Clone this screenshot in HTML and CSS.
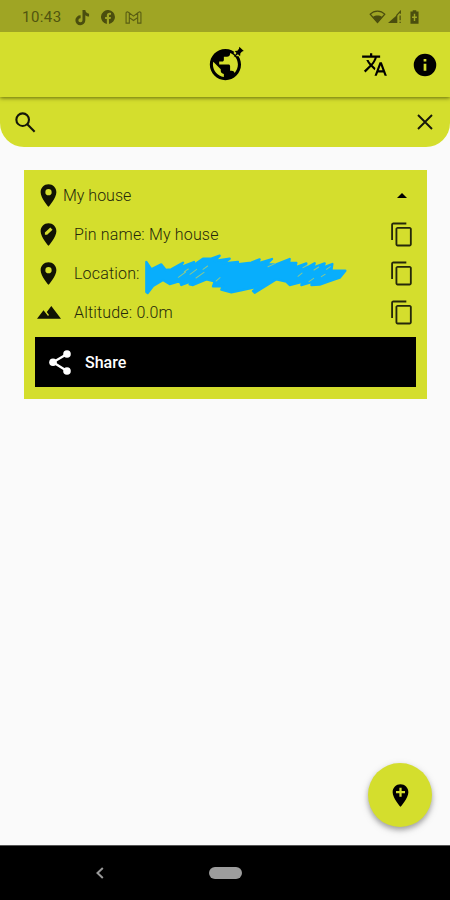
FILE: index.html
```html
<!DOCTYPE html>
<html lang="en">
<head>
<meta charset="utf-8">
<title>Saved pins</title>
<link rel="stylesheet" href="styles.css">
</head>
<body>
<svg class="defs" aria-hidden="true">
  <symbol id="pin" viewBox="0 0 24 24"><path d="M12 2C8.13 2 5 5.13 5 9c0 5.25 7 13 7 13s7-7.75 7-13c0-3.87-3.13-7-7-7zm0 9.8a2.8 2.8 0 1 1 0-5.6 2.8 2.8 0 0 1 0 5.6z"/></symbol>
  <symbol id="copy" viewBox="0 0 24 24"><path d="M16 1H4c-1.100 0-2 .9-2 2v14h1.700V2.700H16V1zm3 4H8c-1.100 0-2 .9-2 2v14c0 1.100.9 2 2 2h11c1.100 0 2-.9 2-2V7c0-1.100-.9-2-2-2zm.3 16.300H7.700V6.700h11.600v14.600z"/></symbol>
</svg>
<div class="phone">
  <header class="status">
    <span class="time">10:43</span>
    <svg class="s-tiktok" viewBox="0 0 16 18"><path d="M8 1h3c.2 2.300 1.700 3.700 4 4v3c-1.500 0-2.900-.5-4-1.300V12a5.300 5.300 0 1 1-5-5.300v3.100A2.200 2.200 0 1 0 8 12z"/></svg>
    <svg class="s-fb" viewBox="0 0 24 24"><path d="M24 12a12 12 0 1 0-14 11.800V15.500H7V12h3V9.400C10 6.400 11.800 4.700 14.500 4.700c1.300 0 2.700.3 2.700.3v3h-1.500c-1.500 0-2 .9-2 1.900V12H17l-.5 3.500h-2.800v8.300A12 12 0 0 0 24 12z"/></svg>
    <svg class="s-mail" viewBox="0 0 18 14"><path d="M1 13V2.200C1 1 2.500.5 3.500 1.300L9 5.500l5.500-4.200C15.500.5 17 1 17 2.200V13h-3.500V7L9 10.300 4.500 7v6zM4.500 2v5M13.500 2v5"/></svg>
    <svg class="s-wifi" viewBox="0 0 18 15"><path class="line" d="M1.200 4.500C5.500 0 12.500 0 16.800 4.500L9 13.500z"/><path d="M4 7.500c3-2 7-2 10 0l-5 6.200z"/></svg>
    <svg class="s-cell" viewBox="0 0 15 15"><path d="M0 14 10 5v9z"/><path class="line" d="m9 6 4.200-4.500V4M13 6v5M13 12.500V14"/></svg>
    <svg class="s-batt" viewBox="0 0 10 15"><path fill-rule="evenodd" d="M3 0h4v1.500h2.500V15h-9V1.500H3zM4.200 4v3H2.300v1.500h1.900V12h1.600V8.500h1.900V7H5.800V4z"/></svg>
  </header>
  <div class="appbar">
    <svg class="globe" viewBox="0 0 36 36"><g transform="translate(-2.300 -.1) scale(1.560)"><path d="M12 2C6.480 2 2 6.480 2 12s4.480 10 10 10 10-4.480 10-10S17.520 2 12 2zm-1 17.930c-3.950-.49-7-3.850-7-7.930 0-.62.08-1.210.21-1.790L9 15v1c0 1.100.9 2 2 2v1.930zm6.900-2.540c-.26-.81-1-1.390-1.900-1.390h-1v-3c0-.55-.45-1-1-1H8v-2h2c.55 0 1-.45 1-1V7h2c1.100 0 2-.9 2-2v-.41c2.930 1.190 5 4.060 5 7.410 0 2.080-.8 3.970-2.100 5.390z"/></g><path class="gap" d="m24.500 7 3-4 4.500 4.500-4 3z"/><path d="m30.300.7 4.500 4.200-1.700.5-1.700 1.800-.3 3-2.200-1.900-4.400 3.300 3-4.500-1.900-2.200 2.800-.2L30 2.800z"/></svg>
    <svg class="translate" viewBox="0 0 24 24"><path d="M12.870 15.070l-2.540-2.510.03-.03c1.740-1.940 2.980-4.170 3.710-6.530H17V4h-7V2H8v2H1v1.990h11.170C11.500 7.920 10.440 9.750 9 11.350 8.070 10.320 7.300 9.190 6.690 8h-2c.73 1.630 1.730 3.170 2.980 4.560l-5.090 5.020L4 19l5-5 3.110 3.110.76-2.040zM18.500 10h-2L12 22h2l1.120-3h4.750L21 22h2l-4.500-12zm-2.620 7l1.620-4.330L19.120 17h-3.240z"/></svg>
    <svg class="info" viewBox="0 0 24 24"><path d="M12 2a10 10 0 1 0 0 20 10 10 0 0 0 0-20zm1.200 15h-2.400v-6h2.400zm0-8h-2.400V6.600h2.400z"/></svg>
  </div>
  <div class="search">
    <svg class="mag" viewBox="0 0 20 20"><circle cx="7.300" cy="7.300" r="6"/><path d="m11.700 11.700 7 7"/></svg>
    <svg class="close" viewBox="0 0 16 16"><path d="m1 1 14 14M15 1 1 15"/></svg>
  </div>
  <main class="content">
    <section class="card">
      <div class="row head">
        <svg class="ico"><use href="#pin"/></svg>
        <span class="label">My house</span>
        <svg class="caret" viewBox="0 0 10 5"><path d="M0 5 5 0l5 5z"/></svg>
      </div>
      <div class="row">
        <svg class="ico" viewBox="0 0 24 24"><path fill-rule="evenodd" d="M12 2C8.130 2 5 5.130 5 9c0 5.250 7 13 7 13s7-7.750 7-13c0-3.870-3.130-7-7-7zM8.800 12.300v-2l4.800-4.600 2 2-4.800 4.600z"/></svg>
        <span class="label">Pin name: My house</span>
        <svg class="copy"><use href="#copy"/></svg>
      </div>
      <div class="row">
        <svg class="ico"><use href="#pin"/></svg>
        <span class="label">Location:</span>
        <svg class="scribble" viewBox="40 35 620 125"><path d="M50 62 65 84 95 69 108 86 125 84 160 64 150 79 193 62 185 76 220 52 245 52 270 43 255 59 300 52 280 66 325 62 320 69 365 64 390 54 385 66 427 53 410 69 440 69 480 53 478 64 500 65 495 79 530 66 525 82 555 66 550 79 585 66 580 79 608 68 605 88 647 88 630 109 595 121 570 130 545 131 550 121 515 131 520 121 480 131 470 121 440 114 375 154 370 149 385 136 330 148 305 153 275 145 280 134 250 135 255 120 230 114 190 131 180 129 200 114 155 131 150 119 120 128 100 116 70 134 54 155 50 152z"/><path class="gap-line" d="m146 108 22-16M181 99l20-15M199 110l24-17M164 91l12-8M220 84l14-10M259 119l12-10M415 76l22-10M505 105l12-10M553 86l14-9M538 121l14-10M575 106l11-7M590 84l12-8M520 79l14-8"/></svg>
        <svg class="copy"><use href="#copy"/></svg>
      </div>
      <div class="row">
        <svg class="ico hills" viewBox="0 0 24 13"><path d="M0 12.800 6.500 4.300l2.800 3.500 1.700 2.100 1-.8-2.200-3L14.300 0 24 12.800z"/></svg>
        <span class="label">Altitude: 0.0m</span>
        <svg class="copy"><use href="#copy"/></svg>
      </div>
      <div class="share">
        <svg viewBox="0 0 22 25"><path d="M18 4 4 12.300 18 21"/><circle cx="18" cy="4" r="3.800"/><circle cx="4" cy="12.300" r="3.800"/><circle cx="18" cy="21" r="3.800"/></svg>
        <span>Share</span>
      </div>
    </section>
    <div class="fab"><svg viewBox="0 0 24 24"><path fill-rule="evenodd" d="M12 2C8.130 2 5 5.130 5 9c0 5.250 7 13 7 13s7-7.750 7-13c0-3.870-3.130-7-7-7zM11 5h2v3h3v2h-3v3h-2v-3H8V8h3z"/></svg></div>
  </main>
  <nav class="nav">
    <svg class="back" viewBox="0 0 8 12"><path d="M6.800 1 1.500 6l5.300 5"/></svg>
    <span class="home"></span>
  </nav>
</div>
</body>
</html>
```

FILE: styles.css
```css
* { box-sizing: border-box; }
body { margin: 0; font-family: Roboto, "Liberation Sans", sans-serif; background: #fafafa; }
svg { display: block; flex: none; }
.defs { position: absolute; width: 0; height: 0; }
.phone { width: 450px; height: 900px; display: flex; flex-direction: column; overflow: hidden; }

.status { height: 32px; flex: none; display: flex; align-items: center; background: #9fa524; padding: 2px 31px 0 22px; color: #51550f; fill: #4b4e0e; position: relative; z-index: 2; }
.time { width: 41px; font-size: 15px; letter-spacing: .45px; white-space: nowrap; }
.s-tiktok { width: 15px; height: 17px; margin-left: 12px; }
.s-fb { width: 14px; height: 14px; margin-left: 11px; }
.s-mail { width: 17px; height: 13px; margin-left: 10px; fill: none; stroke: #5a5e13; stroke-width: 1.2; }
.s-wifi { width: 17px; height: 14px; margin-left: auto; }
.s-cell { width: 14px; height: 14px; margin-left: 2px; }
.s-batt { width: 9px; height: 14px; margin-left: 8px; }
.line { fill: none; stroke: #4b4e0e; stroke-width: 1.3; }

.appbar { height: 65px; flex: none; display: flex; align-items: center; background: #d4de2d; padding: 0 12px 0 209px; position: relative; z-index: 1; box-shadow: 0 1px 4px rgba(50, 55, 0, .7); }
.globe { width: 36px; height: 36px; margin-top: -2px; }
.gap { fill: #d4de2d; }
.translate { width: 27px; height: 27px; margin-left: auto; margin-right: 24px; }
.info { width: 26px; height: 26px; transform: scale(1.04); }

.search { height: 50px; flex: none; display: flex; align-items: center; justify-content: space-between; padding: 0 17px 0 15px; background: #d4de2d; border-radius: 0 0 24px 24px; fill: none; stroke: #15170a; }
.mag { width: 21px; height: 21px; stroke-width: 2; }
.close { width: 16px; height: 16px; stroke-width: 1.9; }

.content { flex: 1; display: flex; flex-direction: column; justify-content: space-between; padding: 23px 18px 18px 24px; }
.card { width: 403px; height: 229px; background: #d4de2d; padding: 6px 11px 11px; }
.row { height: 39px; display: flex; align-items: center; padding: 0 1px 0 0; position: relative; font-size: 16px; font-weight: 300; letter-spacing: .17px; color: #25280a; }
.ico { width: 27px; height: 27px; margin-right: 12px; fill: #111304; }
.head .ico { margin-right: 1px; }
.head .label { letter-spacing: 0; }
.label { white-space: nowrap; }
.hills { width: 24px; height: 13px; margin: 0 13px 0 2px; }
.copy { width: 26px; height: 27px; margin-left: auto; fill: #25280a; }
.caret { width: 10px; height: 5px; margin-left: auto; margin-right: 8px; }
.scribble { position: absolute; left: 108px; top: -1px; width: 206.700px; height: 41.700px; fill: #08aefc; stroke: #08aefc; stroke-width: 7; stroke-linecap: round; stroke-linejoin: round; }
.scribble .gap-line { fill: none; stroke: #8bc88d; stroke-width: 3; }

.share { height: 50px; margin-top: 5px; background: #000; color: #fff; display: flex; align-items: center; gap: 13px; padding: 1px 0 0 14px; font-size: 16px; font-weight: 500; }
.share svg { width: 22px; height: 25px; margin-right: 1px; fill: #fff; }
.share path { fill: none; stroke: #fff; stroke-width: 2.300; }

.fab { width: 64px; height: 64px; border-radius: 50%; align-self: flex-end; display: flex; align-items: center; justify-content: center; background: #d4de2d; box-shadow: 0 3px 5px rgba(0, 0, 0, .28), 0 3px 10px rgba(0, 0, 0, .12); }
.fab svg { width: 27px; height: 27px; }

.nav { height: 55px; flex: none; display: flex; align-items: center; background: #000; padding-left: 96px; border-top: 1px solid #555; }
.back { width: 8px; height: 12px; fill: none; stroke: #999; stroke-width: 2; }
.home { width: 33px; height: 12px; border-radius: 6px; background: #9d9d9d; margin-left: 105px; }
```
